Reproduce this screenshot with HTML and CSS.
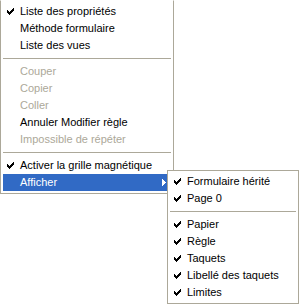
FILE: index.html
```html
<!DOCTYPE html>
<html lang="fr">
<head>
  <meta charset="UTF-8">
  <title>Menu contextuel</title>
  <link rel="stylesheet" href="styles.css">
</head>
<body>
  <div class="menu main-menu">
    <div class="item"><span class="slot"><svg class="check" width="7" height="7" viewBox="0 0 7 7"><path d="M6 0h1v3H6zM5 1h1v3H5zM4 2h1v3H4zM3 3h1v3H3zM2 4h1v3H2zM1 3h1v3H1zM0 2h1v3H0z"/></svg></span>Liste des propriétés</div>
    <div class="item"><span class="slot"></span>Méthode formulaire</div>
    <div class="item"><span class="slot"></span>Liste des vues</div>
    <div class="sep"></div>
    <div class="item disabled"><span class="slot"></span>Couper</div>
    <div class="item disabled"><span class="slot"></span>Copier</div>
    <div class="item disabled"><span class="slot"></span>Coller</div>
    <div class="item"><span class="slot"></span>Annuler Modifier règle</div>
    <div class="item disabled"><span class="slot"></span>Impossible de répéter</div>
    <div class="sep"></div>
    <div class="item"><span class="slot"><svg class="check" width="7" height="7" viewBox="0 0 7 7"><path d="M6 0h1v3H6zM5 1h1v3H5zM4 2h1v3H4zM3 3h1v3H3zM2 4h1v3H2zM1 3h1v3H1zM0 2h1v3H0z"/></svg></span>Activer la grille magnétique</div>
    <div class="item active"><span class="slot"></span>Afficher<svg class="arrow" width="4" height="7" viewBox="0 0 4 7"><path d="M0 0h1v7H0zM1 1h1v5H1zM2 2h1v3H2zM3 3h1v1H3z"/></svg></div>
  </div>

  <!-- sous-menu "Afficher" -->
  <div class="menu sub-menu">
    <div class="item"><span class="slot"><svg class="check" width="7" height="7" viewBox="0 0 7 7"><path d="M6 0h1v3H6zM5 1h1v3H5zM4 2h1v3H4zM3 3h1v3H3zM2 4h1v3H2zM1 3h1v3H1zM0 2h1v3H0z"/></svg></span>Formulaire hérité</div>
    <div class="item"><span class="slot"><svg class="check" width="7" height="7" viewBox="0 0 7 7"><path d="M6 0h1v3H6zM5 1h1v3H5zM4 2h1v3H4zM3 3h1v3H3zM2 4h1v3H2zM1 3h1v3H1zM0 2h1v3H0z"/></svg></span>Page 0</div>
    <div class="sep"></div>
    <div class="item"><span class="slot"><svg class="check" width="7" height="7" viewBox="0 0 7 7"><path d="M6 0h1v3H6zM5 1h1v3H5zM4 2h1v3H4zM3 3h1v3H3zM2 4h1v3H2zM1 3h1v3H1zM0 2h1v3H0z"/></svg></span>Papier</div>
    <div class="item"><span class="slot"><svg class="check" width="7" height="7" viewBox="0 0 7 7"><path d="M6 0h1v3H6zM5 1h1v3H5zM4 2h1v3H4zM3 3h1v3H3zM2 4h1v3H2zM1 3h1v3H1zM0 2h1v3H0z"/></svg></span>Règle</div>
    <div class="item"><span class="slot"><svg class="check" width="7" height="7" viewBox="0 0 7 7"><path d="M6 0h1v3H6zM5 1h1v3H5zM4 2h1v3H4zM3 3h1v3H3zM2 4h1v3H2zM1 3h1v3H1zM0 2h1v3H0z"/></svg></span>Taquets</div>
    <div class="item"><span class="slot"><svg class="check" width="7" height="7" viewBox="0 0 7 7"><path d="M6 0h1v3H6zM5 1h1v3H5zM4 2h1v3H4zM3 3h1v3H3zM2 4h1v3H2zM1 3h1v3H1zM0 2h1v3H0z"/></svg></span>Libellé des taquets</div>
    <div class="item"><span class="slot"><svg class="check" width="7" height="7" viewBox="0 0 7 7"><path d="M6 0h1v3H6zM5 1h1v3H5zM4 2h1v3H4zM3 3h1v3H3zM2 4h1v3H2zM1 3h1v3H1zM0 2h1v3H0z"/></svg></span>Limites</div>
  </div>
</body>
</html>
```

FILE: styles.css
```css
body {
  margin: 0;
  background: #ffffff;
  font-family: "Liberation Sans", Arial, sans-serif;
  font-size: 11px;
  color: #000000;
  position: relative;
  height: 305px;
  overflow: hidden;
}

.menu {
  background: #ffffff;
  border: 1px solid #aca899;
  padding: 2px;
}

.main-menu {
  width: 168px;
  border-top-color: #ffffff;
}

.sub-menu {
  position: absolute;
  left: 167px;
  top: 170px;
  width: 126px;
}

.item {
  display: flex;
  align-items: center;
  height: 17px;
  line-height: 17px;
  white-space: nowrap;
}

.slot {
  width: 17px;
  height: 17px;
  display: flex;
  align-items: center;
  flex-shrink: 0;
}

.check {
  margin-left: 4px;
  fill: #000000;
  shape-rendering: crispEdges;
}

.disabled {
  color: #aca899;
}

.active {
  background: #316ac5;
  color: #ffffff;
}

.arrow {
  margin-left: auto;
  margin-right: 5px;
  fill: #ffffff;
  shape-rendering: crispEdges;
}

.sep {
  height: 1px;
  margin: 4px 0;
  background: #aca899;
}
```
